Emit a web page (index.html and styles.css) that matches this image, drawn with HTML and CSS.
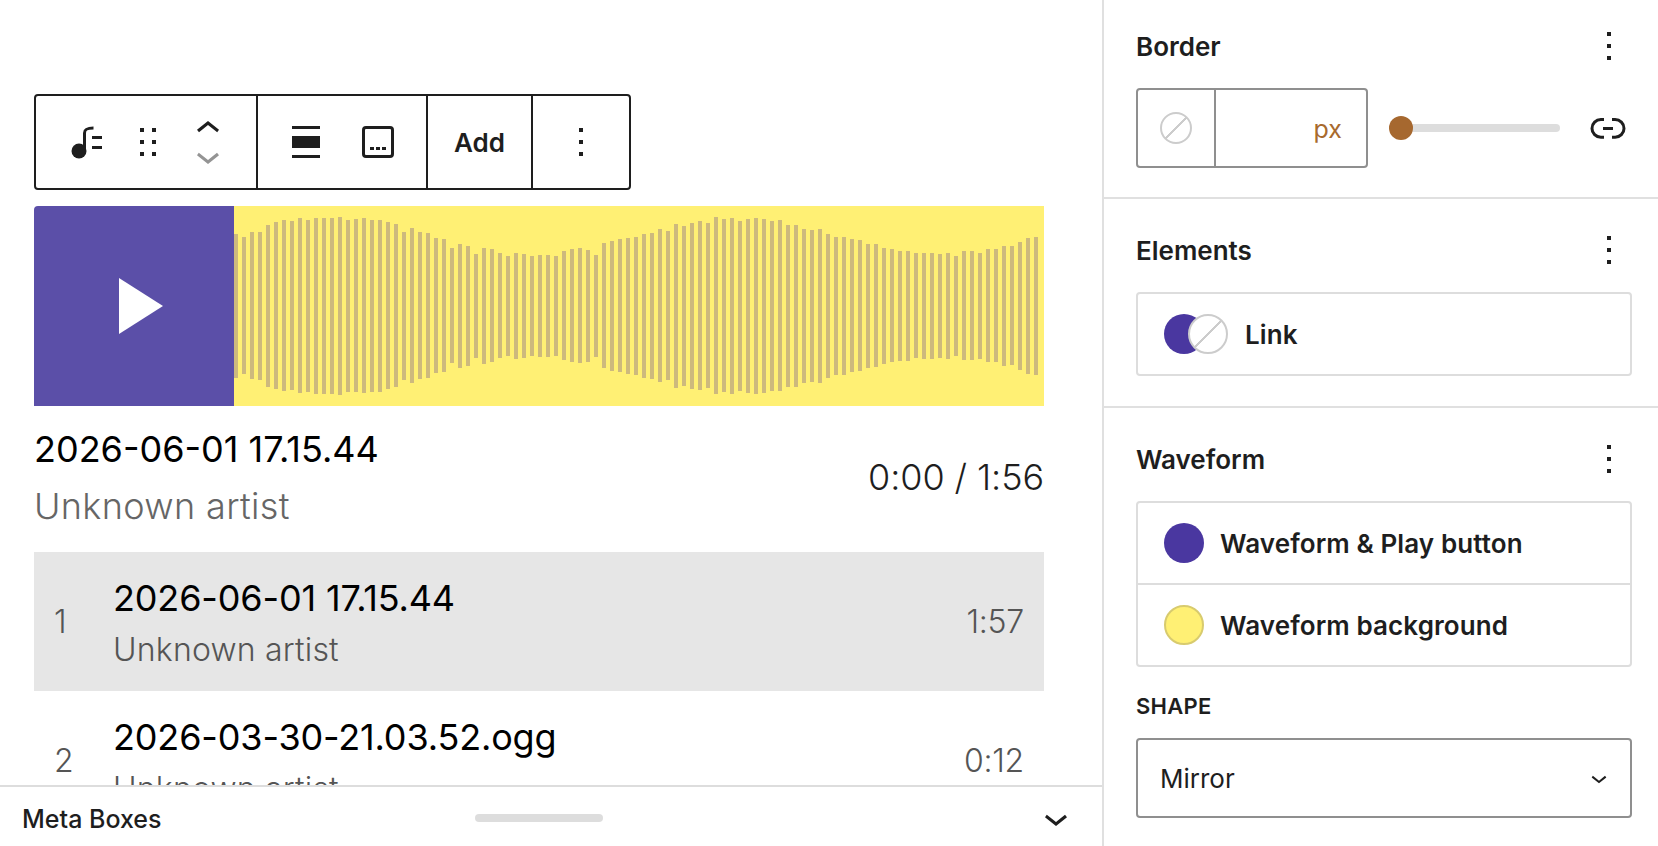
FILE: index.html
```html
<!DOCTYPE html>
<html lang="en">
<head>
  <meta charset="UTF-8" />
  <title>Edit Post</title>
  <link rel="stylesheet" href="styles.css">
</head>
<body>
  <div class="editor">
    <main class="main">
      <div class="canvas">
        <div class="toolbar">
          <div class="tool-group tool-group-first">
            <svg class="icon" viewBox="0 0 48 48"><circle cx="16" cy="33" r="7.5"/><path class="note-stem" d="M21.5 33V15c0-4 3-5 9-5"/><path d="M29 18h10v3H29zM29 28h10v3H29z"/></svg>
            <svg class="icon" viewBox="0 0 24 24"><path d="M8 7h2V5H8v2zm0 6h2v-2H8v2zm0 6h2v-2H8v2zm6-14v2h2V5h-2zm0 8h2v-2h-2v2zm0 6h2v-2h-2v2z"/></svg>
            <div class="mover">
              <svg class="icon" viewBox="0 0 24 24"><path d="M6.5 12.4L12 8l5.5 4.4-.9 1.2L12 10l-4.5 3.6-1-1.2z"/></svg>
              <svg class="icon icon-disabled" viewBox="0 0 24 24"><path d="M17.5 11.6L12 16l-5.5-4.4.9-1.2L12 14l4.5-3.6 1 1.2z"/></svg>
            </div>
          </div>
          <div class="tool-group tool-group-second">
            <svg class="icon" viewBox="0 0 24 24"><path d="M19 5.5H5V4h14v1.5ZM19 20H5v-1.5h14V20ZM5 9h14v6H5V9Z"/></svg>
            <svg class="icon" viewBox="0 0 24 24"><path fill-rule="evenodd" d="M6 5.5h12a.5.5 0 0 1 .5.5v12a.5.5 0 0 1-.5.5H6a.5.5 0 0 1-.5-.5V6a.5.5 0 0 1 .5-.5ZM4 6a2 2 0 0 1 2-2h12a2 2 0 0 1 2 2v12a2 2 0 0 1-2 2H6a2 2 0 0 1-2-2V6Zm4 10h2v-1.5H8V16Zm5 0h-2v-1.5h2V16Zm1 0h2v-1.5h-2V16Z"/></svg>
          </div>
          <div class="tool-group tool-add">Add</div>
          <div class="tool-group tool-group-last">
            <svg class="icon" viewBox="0 0 24 24"><path d="M13 19h-2v-2h2v2zm0-6h-2v-2h2v2zm0-6h-2V5h2v2z"/></svg>
          </div>
        </div>

        <div class="player">
          <div class="play-button"><span class="play-triangle"></span></div>
          <div class="waveform">
            <svg class="waveform-svg" viewBox="0 0 810 200"><path d="M2 28V172M10 31V168M18 26V173M26 26V174M34 19V181M42 16V183M50 14V185M58 15V184M66 12V187M74 14V186M82 12V188M90 12V188M98 12V188M106 11V189M114 14V186M122 13V186M130 12V187M138 14V186M146 14V186M154 16V183M162 18V181M170 26V174M178 22V177M186 26V173M194 27V172M202 32V167M210 33V166M218 42V157M226 38V162M234 40V160M242 48V152M250 42V158M258 43V156M266 47V152M274 50V150M282 47V153M290 48V152M298 50V150M306 49V151M314 49V151M322 50V150M330 45V154M338 43V156M346 42V157M354 44V156M362 49V151M370 37V162M378 35V165M386 33V166M394 32V168M402 31V169M410 28V172M418 27V173M426 23V176M434 25V174M442 18V182M450 20V180M458 17V183M466 15V184M474 17V182M482 11V188M490 13V186M498 12V188M506 15V185M514 13V187M522 12V188M530 13V187M538 15V185M546 14V185M554 19V181M562 19V181M570 23V177M578 24V176M586 23V177M594 28V172M602 31V169M610 31V169M618 33V166M626 34V165M634 38V162M642 38V161M650 42V158M658 43V156M666 45V155M674 45V155M682 47V152M690 47V153M698 47V153M706 48V152M714 47V153M722 50V150M730 45V154M738 45V154M746 47V153M754 43V156M762 43V156M770 40V160M778 40V159M786 36V164M794 32V168M802 31V169"/></svg>
          </div>
        </div>

        <div class="track-info">
          <div>
            <div class="track-title">2026-06-01 17.15.44</div>
            <div class="track-artist">Unknown artist</div>
          </div>
          <div class="track-time">0:00 / 1:56</div>
        </div>

        <div class="playlist-row playlist-row-active">
          <span class="row-num">1</span>
          <div class="row-text">
            <div class="row-title">2026-06-01 17.15.44</div>
            <div class="row-artist">Unknown artist</div>
          </div>
          <span class="row-time">1:57</span>
        </div>
        <div class="playlist-row">
          <span class="row-num">2</span>
          <div class="row-text">
            <div class="row-title">2026-03-30-21.03.52.ogg</div>
            <div class="row-artist">Unknown artist</div>
          </div>
          <span class="row-time">0:12</span>
        </div>
      </div>

      <div class="meta-boxes">
        <span class="meta-label">Meta Boxes</span>
        <span class="meta-handle"></span>
        <svg class="icon" viewBox="0 0 24 24"><path d="M17.5 11.6L12 16l-5.5-4.4.9-1.2L12 14l4.5-3.6 1 1.2z"/></svg>
      </div>
    </main>

    <aside class="sidebar">
      <section class="panel panel-border">
        <div class="panel-head">
          <h2>Border</h2>
          <svg class="icon" viewBox="0 0 24 24"><path d="M13 19h-2v-2h2v2zm0-6h-2v-2h2v2zm0-6h-2V5h2v2z"/></svg>
        </div>
        <div class="border-row">
          <div class="border-input">
            <div class="border-swatch"><span class="swatch swatch-none swatch-small"></span></div>
            <div class="border-unit">px</div>
          </div>
          <div class="slider"><span class="slider-track"></span><span class="slider-thumb"></span></div>
          <svg class="icon" viewBox="0 0 24 24"><path d="M10 17.389H8.444A5.194 5.194 0 1 1 8.444 7H10v1.5H8.444a3.694 3.694 0 0 0 0 7.389H10v1.5ZM14 7h1.556a5.194 5.194 0 0 1 0 10.39H14v-1.5h1.556a3.694 3.694 0 0 0 0-7.39H14V7Zm-4.5 6h5v-1.5h-5V13Z"/></svg>
        </div>
      </section>

      <section class="panel">
        <div class="panel-head">
          <h2>Elements</h2>
          <svg class="icon" viewBox="0 0 24 24"><path d="M13 19h-2v-2h2v2zm0-6h-2v-2h2v2zm0-6h-2V5h2v2z"/></svg>
        </div>
        <div class="item-list">
          <div class="item">
            <span class="swatch swatch-purple"></span>
            <span class="swatch swatch-none swatch-overlap"></span>
            <span class="item-label">Link</span>
          </div>
        </div>
      </section>

      <section class="panel panel-last">
        <div class="panel-head">
          <h2>Waveform</h2>
          <svg class="icon" viewBox="0 0 24 24"><path d="M13 19h-2v-2h2v2zm0-6h-2v-2h2v2zm0-6h-2V5h2v2z"/></svg>
        </div>
        <div class="item-list">
          <div class="item">
            <span class="swatch swatch-purple"></span>
            <span class="item-label">Waveform &amp; Play button</span>
          </div>
          <div class="item">
            <span class="swatch swatch-yellow"></span>
            <span class="item-label">Waveform background</span>
          </div>
        </div>
        <div class="field-label">SHAPE</div>
        <div class="select">
          <span>Mirror</span>
          <svg class="select-chevron" viewBox="0 0 24 24"><path d="M17.5 11.6L12 16l-5.5-4.4.9-1.2L12 14l4.5-3.6 1 1.2z"/></svg>
        </div>
      </section>
    </aside>
  </div>
</body>
</html>
```

FILE: styles.css
```css
* { margin: 0; padding: 0; box-sizing: border-box; }
body {
  font-family: 'Inter', sans-serif;
  background: #fff;
  color: #1e1e1e;
  height: 100vh;
  overflow: hidden;
}
.editor { display: flex; height: 100vh; }
.icon { width: 48px; height: 48px; fill: #1e1e1e; flex: none; display: block; }
.icon-disabled { fill: #949494; }

/* canvas */
.main { width: 1102px; display: flex; flex-direction: column; }
.canvas { flex: 1; min-height: 0; overflow: hidden; padding: 94px 58px 0 34px; }

.toolbar {
  display: flex;
  width: 597px;
  height: 96px;
  border: 2px solid #1e1e1e;
  border-radius: 4px;
  margin-bottom: 16px;
}
.tool-group { display: flex; align-items: center; border-right: 2px solid #1e1e1e; }
.tool-group-first { padding: 0 24px 0 27px; gap: 12.5px; width: 222px; }
.tool-group-second { padding: 0 24px; gap: 24px; width: 170px; }
.tool-add { width: 105px; justify-content: center; font-size: 26px; font-weight: 600; }
.tool-group-last { padding: 0 24px; border-right: 0; }
.note-stem { fill: none; stroke: #1e1e1e; stroke-width: 3; }
.mover { width: 48px; height: 48px; position: relative; }
.mover .icon { position: absolute; left: 0; top: -13px; }
.mover .icon-disabled { top: 14px; }

.player { display: flex; height: 200px; border-top-left-radius: 4px; overflow: hidden; }
.play-button {
  width: 200px;
  padding-left: 14px;
  background: #5b4fa8;
  display: flex;
  align-items: center;
  justify-content: center;
}
.play-triangle {
  border-left: 44px solid #fff;
  border-top: 28px solid transparent;
  border-bottom: 28px solid transparent;
}
.waveform { flex: 1; background: #fff074; }
.waveform-svg { display: block; width: 810px; height: 200px; }
.waveform-svg path { stroke: #cdb97d; stroke-width: 4; fill: none; }

.track-info {
  display: flex;
  justify-content: space-between;
  align-items: center;
  padding-top: 15px;
  margin-bottom: 17px;
  font-size: 36px;
  line-height: 57px;
}
.track-title { color: #000; }
.track-artist { color: #666; font-weight: 300; letter-spacing: 0.35px; }
.track-time { color: #1e1e1e; font-weight: 300; letter-spacing: -0.1px; margin-top: -1px; }

.playlist-row {
  display: flex;
  align-items: center;
  height: 139px;
  padding: 0 20px;
  flex: none;
}
.playlist-row-active { background: #e6e6e6; }
.row-num { width: 59px; font-size: 32px; font-weight: 300; color: #555; }
.row-text { flex: 1; padding-top: 2px; }
.row-title { font-size: 36px; line-height: 54px; color: #000; letter-spacing: -0.15px; }
.row-artist { font-size: 32px; line-height: 50px; font-weight: 300; color: #555; letter-spacing: 0.2px; }
.row-time { font-size: 32px; font-weight: 300; color: #555; letter-spacing: -0.25px; }

.meta-boxes {
  flex: none;
  height: 61px;
  border-top: 2px solid #ddd;
  background: #fff;
  padding: 3px 22px 0 22px;
  display: flex;
  align-items: center;
  justify-content: space-between;
  position: relative;
}
.meta-label { font-size: 25px; font-weight: 500; margin-top: 2px; }
.meta-handle {
  position: absolute;
  left: 475px;
  top: 27px;
  width: 128px;
  height: 8px;
  border-radius: 4px;
  background: #ddd;
}

/* sidebar */
.sidebar { width: 556px; border-left: 2px solid #e0e0e0; }
.panel { padding: 27px 26px 30px 32px; border-bottom: 2px solid #e0e0e0; }
.panel-border { padding-top: 22px; padding-bottom: 29px; }
.panel-last { border-bottom: 0; }
.panel-head {
  display: flex;
  align-items: center;
  justify-content: space-between;
  height: 48px;
  margin-bottom: 18px;
}
.panel-head .icon { margin-right: -1px; }
.panel-head h2 { font-size: 26px; font-weight: 600; line-height: 48px; padding-top: 1px; }
.panel-border h2 { padding-top: 2px; }

.border-row { display: flex; align-items: center; }
.border-input {
  display: flex;
  width: 232px;
  height: 80px;
  border: 2px solid #8f8f8f;
  border-radius: 4px;
}
.border-swatch {
  width: 78px;
  border-right: 2px solid #8f8f8f;
  display: flex;
  align-items: center;
  justify-content: center;
}
.border-unit {
  flex: 1;
  text-align: right;
  padding-right: 24px;
  line-height: 78px;
  font-size: 25px;
  color: #a86a2e;
}
.slider { width: 171px; height: 24px; margin: 0 24px 0 21px; position: relative; flex: none; }
.slider-track {
  position: absolute;
  left: 12px;
  right: 0;
  top: 8px;
  height: 8px;
  border-radius: 4px;
  background: #ddd;
}
.slider-thumb {
  position: absolute;
  left: 0;
  top: 0;
  width: 24px;
  height: 24px;
  border-radius: 50%;
  background: #a6682f;
}

.swatch { display: block; width: 40px; height: 40px; border-radius: 50%; flex: none; }
.swatch-purple { background: #4a37a0; }
.swatch-yellow { background: #fff074; border: 2px solid #d8cb6e; }
.swatch-none {
  border: 2px solid #ccc;
  background: linear-gradient(135deg, #fff 48%, #ccc 48%, #ccc 52%, #fff 52%);
}
.swatch-small { width: 32px; height: 32px; }
.swatch-overlap { margin-left: -16px; }

.item-list { border: 2px solid #ddd; border-radius: 4px; }
.item {
  display: flex;
  align-items: center;
  height: 80px;
  padding: 0 26px;
  font-size: 26px;
  font-weight: 600;
}
.item + .item { height: 82px; border-top: 2px solid #ddd; }
.item-label { margin-left: 16px; letter-spacing: 0.1px; }
.swatch-overlap + .item-label { margin-left: 17px; }
.field-label { font-size: 22px; font-weight: 600; line-height: 24px; letter-spacing: 0.3px; margin: 27px 0 20px; }
.select {
  display: flex;
  align-items: center;
  justify-content: space-between;
  height: 80px;
  padding: 0 15px 0 22px;
  border: 2px solid #8f8f8f;
  border-radius: 4px;
  font-size: 26px;
}
.select-chevron { width: 32px; height: 32px; fill: #1e1e1e; }
```
